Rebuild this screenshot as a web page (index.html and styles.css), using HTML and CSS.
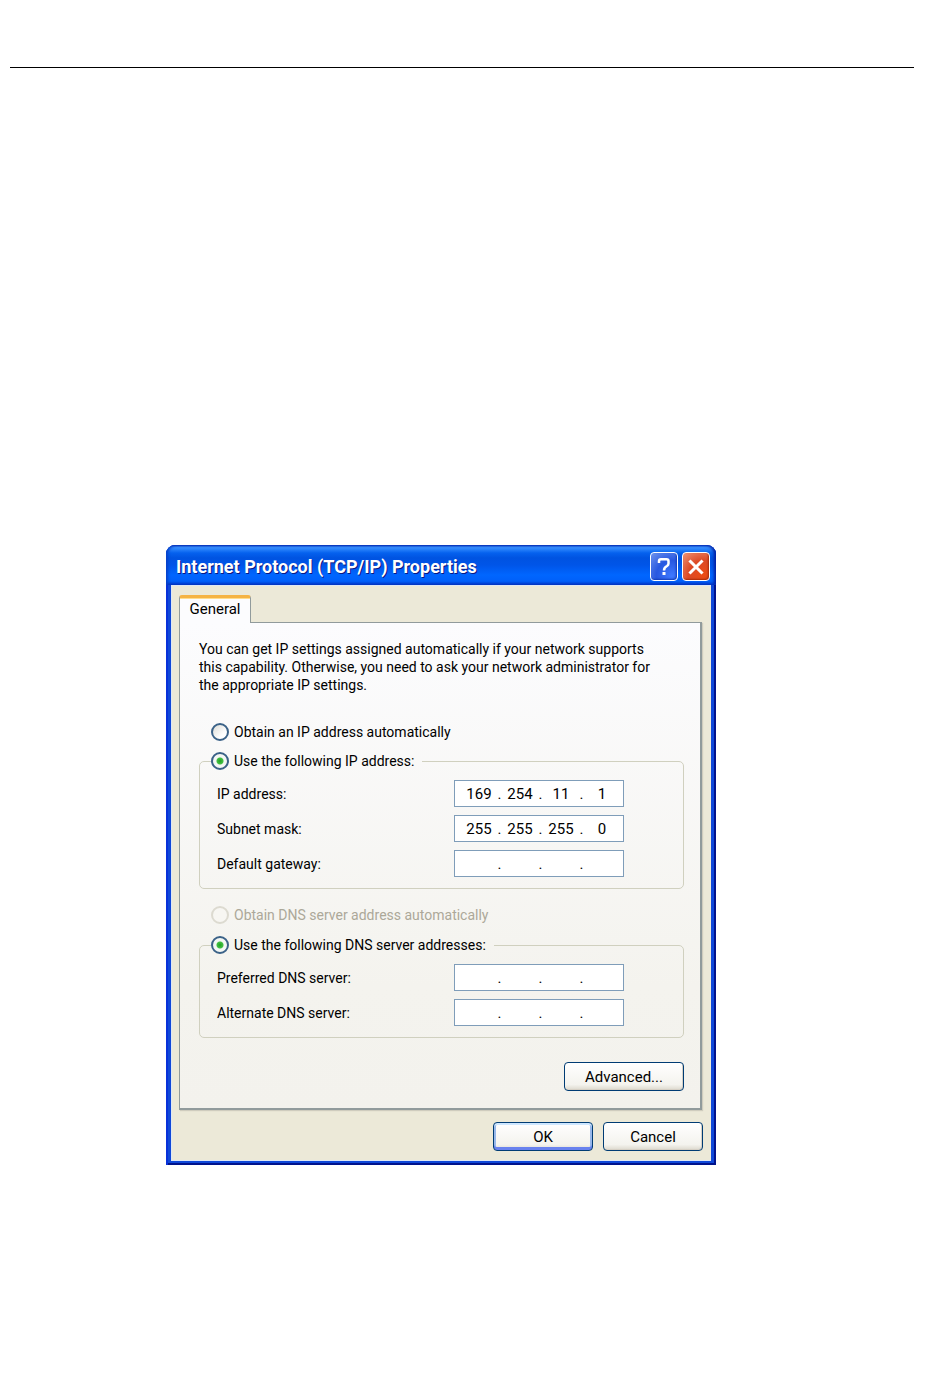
FILE: index.html
```html
<!DOCTYPE html>
<html lang="en">
<head>
    <meta charset="UTF-8">
    <meta name="viewport" content="width=device-width, initial-scale=1.0">
    <title>Internet Protocol (TCP/IP) Properties</title>
    <link rel="stylesheet" href="styles.css">
</head>
<body>

    <hr class="page-rule">

    <form class="dialog">
        <header class="titlebar">
            <h1>Internet Protocol (TCP/IP) Properties</h1>
            <button type="button" class="caption-btn help" aria-label="Help">
                <svg viewBox="0 0 24 24" width="24" height="24">
                    <path d="M7 8V6Q7 4.200 9 4.200H14.500Q16.500 4.200 16.500 6V8.500Q16.500 10 15 11Q12 12.500 12 15.500" fill="none" stroke="#fff" stroke-width="2.500"/>
                    <rect x="10.500" y="17" width="3" height="3" fill="#fff"/>
                </svg>
            </button>
            <button type="button" class="caption-btn close" aria-label="Close">
                <svg viewBox="0 0 24 24" width="24" height="24">
                    <path d="M6.500 6.500L17.500 17.500M17.500 6.500L6.500 17.500" fill="none" stroke="#fff" stroke-width="3" stroke-linecap="square"/>
                </svg>
            </button>
        </header>

        <main class="content">
            <button type="button" class="tab">General</button>

            <section class="panel">
                <p class="intro">You can get IP settings assigned automatically if your network supports<br>
                    this capability. Otherwise, you need to ask your network administrator for<br>
                    the appropriate IP settings.</p>

                <label class="option"><input type="radio" name="ip"> Obtain an IP address automatically</label>

                <fieldset>
                    <legend><label class="choice"><input type="radio" name="ip" checked> Use the following IP address:</label></legend>
                    <div class="row">
                        <label for="ip1">IP address:</label>
                        <div class="address">
                            <input type="text" id="ip1" value="169"><span>.</span>
                            <input type="text" aria-label="IP address, part 2" value="254"><span>.</span>
                            <input type="text" aria-label="IP address, part 3" value="11"><span>.</span>
                            <input type="text" aria-label="IP address, part 4" value="1">
                        </div>
                    </div>
                    <div class="row">
                        <label for="mask1">Subnet mask:</label>
                        <div class="address">
                            <input type="text" id="mask1" value="255"><span>.</span>
                            <input type="text" aria-label="Subnet mask, part 2" value="255"><span>.</span>
                            <input type="text" aria-label="Subnet mask, part 3" value="255"><span>.</span>
                            <input type="text" aria-label="Subnet mask, part 4" value="0">
                        </div>
                    </div>
                    <div class="row">
                        <label for="gateway1">Default gateway:</label>
                        <div class="address">
                            <input type="text" id="gateway1"><span>.</span>
                            <input type="text" aria-label="Default gateway, part 2"><span>.</span>
                            <input type="text" aria-label="Default gateway, part 3"><span>.</span>
                            <input type="text" aria-label="Default gateway, part 4">
                        </div>
                    </div>
                </fieldset>

                <label class="option dns disabled"><input type="radio" name="dns" disabled> Obtain DNS server address automatically</label>

                <fieldset>
                    <legend><label class="choice"><input type="radio" name="dns" checked> Use the following DNS server addresses:</label></legend>
                    <div class="row">
                        <label for="dns1">Preferred DNS server:</label>
                        <div class="address">
                            <input type="text" id="dns1"><span>.</span>
                            <input type="text" aria-label="Preferred DNS server, part 2"><span>.</span>
                            <input type="text" aria-label="Preferred DNS server, part 3"><span>.</span>
                            <input type="text" aria-label="Preferred DNS server, part 4">
                        </div>
                    </div>
                    <div class="row">
                        <label for="alt1">Alternate DNS server:</label>
                        <div class="address">
                            <input type="text" id="alt1"><span>.</span>
                            <input type="text" aria-label="Alternate DNS server, part 2"><span>.</span>
                            <input type="text" aria-label="Alternate DNS server, part 3"><span>.</span>
                            <input type="text" aria-label="Alternate DNS server, part 4">
                        </div>
                    </div>
                </fieldset>

                <button type="button" class="btn advanced">Advanced...</button>
            </section>

            <footer class="actions">
                <button type="submit" class="btn default">OK</button>
                <button type="button" class="btn">Cancel</button>
            </footer>
        </main>
    </form>

</body>
</html>
```

FILE: styles.css
```css
* {
    box-sizing: border-box;
}

body {
    margin: 0;
    padding: 67px 36px 40px 10px;
    background: #fff;
    color: #000;
    font-family: Roboto, "Liberation Sans", sans-serif;
    font-size: 14px;
    line-height: 18px;
}

input,
button {
    font: inherit;
    color: inherit;
}

.page-rule {
    height: 1px;
    margin: 0 0 477px;
    border: none;
    background: #000;
}

/* Window frame */
.dialog {
    max-width: 550px;
    margin-left: 156px;
    padding: 0 5px 4px;
    border-radius: 9px 9px 0 0;
    background: #0f48d8;
    box-shadow: inset 2px 0 #0831d9, inset -2px -2px #00138c;
}

.titlebar {
    display: flex;
    align-items: center;
    gap: 4px;
    height: 40px;
    margin: 0 -5px;
    padding: 3px 6px 0 10px;
    border-radius: 9px 9px 0 0;
    background: linear-gradient(#0831b9 0, #3b93ff 2px, #2a83fb 4px, #0561ee 8px, #0053e1 13px, #0055e8 20px, #0066ff 30px, #0060fa 36px, #003dd0 40px);
    box-shadow: inset 2px 0 3px #0840c8, inset -2px 0 3px #001ca0;
}

h1 {
    flex: 1;
    margin: 0;
    color: #fff;
    font-size: 18px;
    font-weight: bold;
    line-height: 24px;
    text-shadow: 1px 1px #0a1883;
}

.caption-btn {
    display: flex;
    align-items: center;
    justify-content: center;
    width: 28px;
    height: 29px;
    padding: 0;
    border: 1px solid #fff;
    border-radius: 4px;
}

.help {
    background: radial-gradient(circle at 80% 85%, #3f79ff, #2858e0 50%, #6f94ee);
    box-shadow: inset -1px -1px 2px #123cb8;
}

.close {
    background: radial-gradient(circle at 80% 85%, #ec4c15, #dc4a25 50%, #ee9578);
    box-shadow: inset -1px -1px 2px #a82a08;
}

.content {
    padding: 9px 8px;
    border: solid #dfe8f4;
    border-width: 1px 0 1px 1px;
    background: #ece9d8;
}

/* Tab and its panel */
.tab {
    display: block;
    position: relative;
    width: 72px;
    height: 28px;
    margin: 0 0 -1px -1px;
    padding: 0 0 4px;
    border: 1px solid #919b9c;
    border-top: 3px solid #f5b344;
    border-bottom: none;
    border-radius: 3px 3px 0 0;
    background: #fcfcfe;
    box-shadow: inset 0 1px #ffdc8c;
    font-size: 15px;
}

.panel {
    margin: 0 1px 0 -1px;
    padding: 17px 16px 17px 19px;
    border: 1px solid #919b9c;
    border-width: 1px 2px 2px 1px;
    background: linear-gradient(#fcfcfe, #f4f3ee 75%, #f3f2ed);
    box-shadow: 1px 1px 1px #cfccbe;
}

.intro {
    margin: 0 0 29px;
}

.option {
    display: flex;
    align-items: center;
    gap: 5px;
    width: fit-content;
    margin: 0 0 11px 12px;
}

.dns {
    margin-top: 17px;
    margin-bottom: 12px;
}

.disabled {
    color: #aca899;
}

.choice {
    display: flex;
    align-items: center;
    gap: 5px;
}

input[type="radio"] {
    appearance: none;
    width: 18px;
    height: 18px;
    margin: 0;
    border: 2px solid #3b6288;
    border-radius: 50%;
    background: linear-gradient(135deg, #dcdcd7, #fff 70%);
}

input[type="radio"]:checked {
    background: radial-gradient(circle, #21a121 0, #43bf43 3px, #f4f7f4 4px);
}

input[type="radio"]:disabled {
    border-color: #dcdad0;
    background: #f7f6f2;
}

fieldset {
    display: flex;
    flex-direction: column;
    gap: 8px;
    min-width: 0;
    margin: 0;
    padding: 10px 0 11px 17px;
    border: 1px solid #d0d0bf;
    border-radius: 5px;
}

legend {
    margin-left: -6px;
    padding: 0 8px 0 0;
}

.row {
    display: flex;
    align-items: center;
}

.row > label {
    flex: 0 0 237px;
}

.address {
    display: flex;
    align-items: center;
    width: 170px;
    height: 27px;
    padding: 0 3px 0 6px;
    border: 1px solid #7f9db9;
    background: #fff;
    font-size: 15px;
}

.address input {
    width: 36px;
    height: 18px;
    padding: 0;
    border: none;
    outline: none;
    background: transparent;
    text-align: center;
}

.address span {
    width: 5px;
    text-align: center;
}

/* Push buttons */
.btn {
    width: 100px;
    height: 29px;
    padding: 0;
    border: 1px solid #003c74;
    border-radius: 4px;
    background: linear-gradient(#fff, #f4f3ee 80%, #dcd8cc);
    box-shadow: inset -1px -1px #d6d0c5;
    font-size: 15px;
}

.default {
    box-shadow: inset 0 2px #cee7ff, inset 0 -3px #6982ee, inset 0 0 0 2px #98b8ea;
}

.advanced {
    display: block;
    width: 120px;
    margin: 24px 0 0 auto;
}

.actions {
    display: flex;
    justify-content: flex-end;
    gap: 10px;
    margin-top: 12px;
}
```
